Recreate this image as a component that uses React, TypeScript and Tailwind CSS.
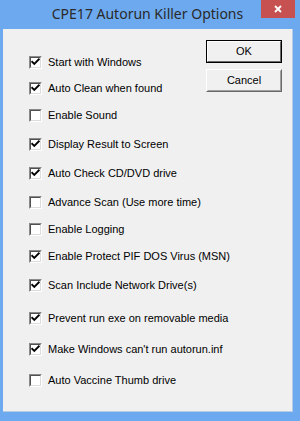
import React from "react";

const items: { label: string; checked: boolean; mt: string }[] = [
  { label: "Start with Windows", checked: true, mt: "mt-0" },
  { label: "Auto Clean when found", checked: true, mt: "mt-[13px]" },
  { label: "Enable Sound", checked: false, mt: "mt-[14px]" },
  { label: "Display Result to Screen", checked: true, mt: "mt-[16px]" },
  { label: "Auto Check CD/DVD drive", checked: true, mt: "mt-[16px]" },
  { label: "Advance Scan (Use more time)", checked: false, mt: "mt-[16px]" },
  { label: "Enable Logging", checked: false, mt: "mt-[14px]" },
  { label: "Enable Protect PIF DOS Virus (MSN)", checked: true, mt: "mt-[14px]" },
  { label: "Scan Include Network Drive(s)", checked: true, mt: "mt-[16px]" },
  { label: "Prevent run exe on removable media", checked: true, mt: "mt-[20px]" },
  { label: "Make Windows can't run autorun.inf", checked: true, mt: "mt-[18px]" },
  { label: "Auto Vaccine Thumb drive", checked: false, mt: "mt-[18px]" },
];

function Box({ checked }: { checked: boolean }) {
  return (
    <div className="w-[13px] h-[13px] shrink-0 border border-t-[#8a8a8a] border-l-[#8a8a8a] border-b-[#ffffff] border-r-[#ffffff]">
      <div className="w-full h-full bg-white border border-t-[#505050] border-l-[#505050] border-b-[#dcdcdc] border-r-[#dcdcdc] relative">
        {checked && (
          <svg width="9" height="9" viewBox="0 0 9 9" className="absolute left-0 top-0">
            <path d="M1.2 3.8 L3.3 6 L7.8 1.4" stroke="#000" strokeWidth="1.9" fill="none" strokeLinecap="square" />
          </svg>
        )}
      </div>
    </div>
  );
}

export default function App() {
  return (
    <div
      className="w-[300px] h-[421px] bg-[#6ca9ee] flex flex-col overflow-hidden"
      style={{ fontFamily: '"Liberation Sans", Arial, sans-serif' }}
    >
      <div className="h-[29px] shrink-0 relative flex items-center justify-center pr-[5px]">
        <span
          className="text-[14px] text-[#2a2a2a] leading-none -mt-[2px]"
          style={{ fontFamily: '"Noto Sans", "Open Sans", sans-serif' }}
        >
          CPE17 Autorun Killer Options
        </span>
        <div className="absolute right-[5px] top-0 w-[34px] h-[18px] bg-[#c75050] flex items-center justify-center">
          <svg width="8" height="8" viewBox="0 0 8 8">
            <path d="M1 1 L7 7 M7 1 L1 7" stroke="#fff" strokeWidth="1.8" />
          </svg>
        </div>
      </div>
      <div className="flex-1 ml-[3px] mr-[7px] mb-[9px] bg-[#f0f0f0] border-r border-b border-[#b7cde6] flex">
        <div className="flex-1 min-w-0 pl-[26px] pt-[27px] flex flex-col">
          {items.map((it) => (
            <div key={it.label} className={`h-[13px] flex items-center gap-[6px] whitespace-nowrap ${it.mt}`}>
              <Box checked={it.checked} />
              <span className="text-[11px] text-black leading-none">{it.label}</span>
            </div>
          ))}
        </div>
        <div className="w-[76px] mr-[10px] pt-[11px] flex flex-col gap-[6px] shrink-0">
          <div className="h-[23px] border border-black">
            <div className="w-full h-full border border-t-white border-l-white border-b-[#696969] border-r-[#696969] flex items-center justify-center text-[11px] text-black">
              OK
            </div>
          </div>
          <div className="h-[23px] border border-t-white border-l-white border-b-[#696969] border-r-[#696969]">
            <div className="w-full h-full border border-t-[#f0f0f0] border-l-[#f0f0f0] border-b-[#a0a0a0] border-r-[#a0a0a0] flex items-center justify-center text-[11px] text-black">
              Cancel
            </div>
          </div>
        </div>
      </div>
    </div>
  );
}
